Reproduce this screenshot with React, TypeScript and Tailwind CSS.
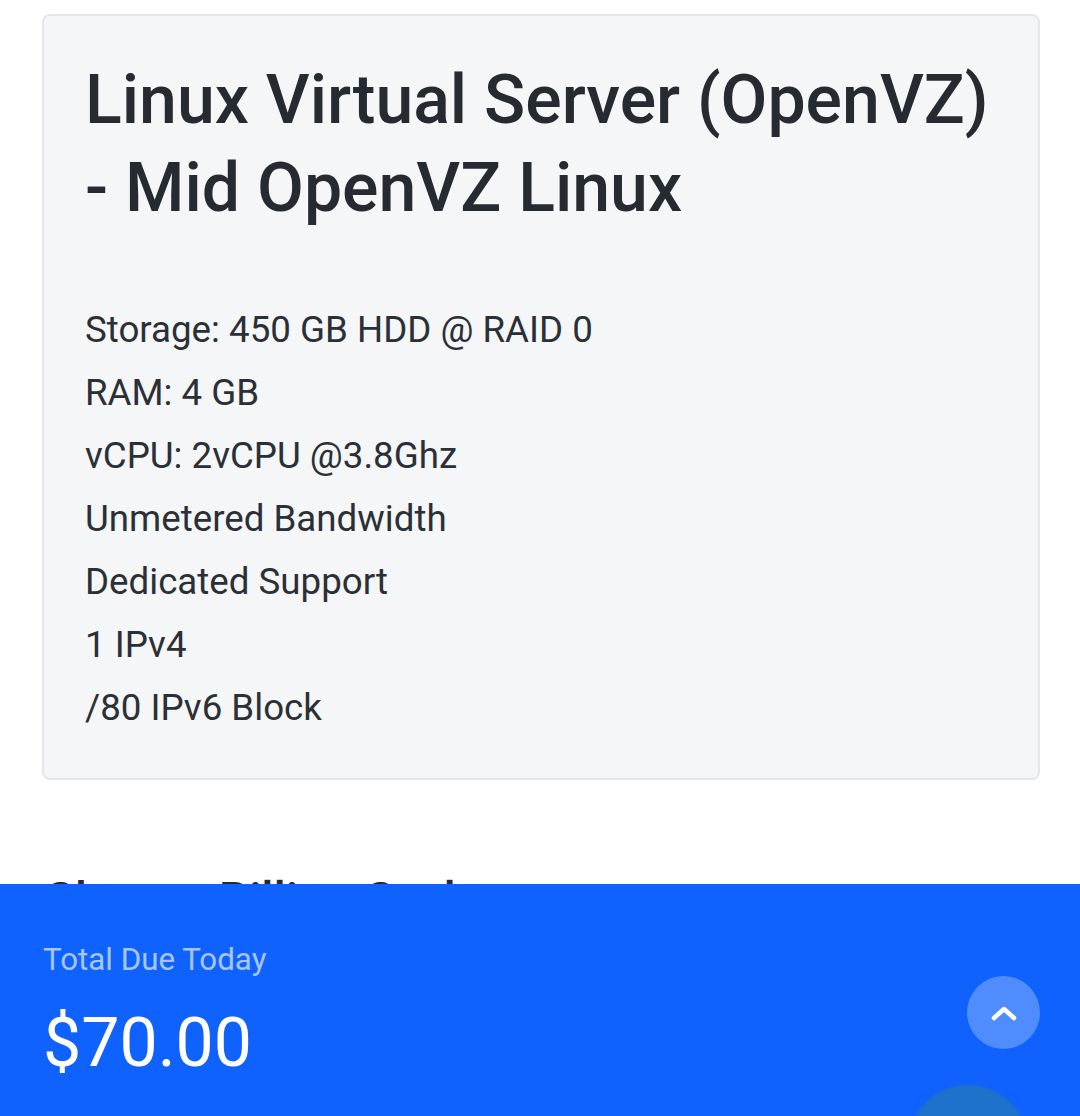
import React from 'react';

const features = [
  'Storage: 450 GB HDD @ RAID 0',
  'RAM: 4 GB',
  'vCPU: 2vCPU @3.8Ghz',
  'Unmetered Bandwidth',
  'Dedicated Support',
  '1 IPv4',
  '/80 IPv6 Block',
];

export default function App() {
  return (
    <div className="relative h-[1116px] w-[1080px] overflow-hidden bg-white font-['Roboto',sans-serif] text-[#2b3036]">
      {/* Product card */}
      <div className="ml-[42px] mr-[40px] mt-[14px] rounded-lg border-2 border-[#e4e6ea] bg-[#f5f6f8] px-[41px] pb-[39px] pt-[40px]">
        <h1 className="text-[68px] font-medium leading-[88px] text-[#262a31]">
          Linux Virtual Server (OpenVZ) - Mid OpenVZ Linux
        </h1>
        <div className="mt-[66px] text-[36.7px] leading-[63px]">
          {features.map((f) => (
            <div key={f}>{f}</div>
          ))}
        </div>
      </div>

      <h2 className="ml-[44px] mt-[84px] text-[48px] font-medium text-[#262a31]">Choose Billing Cycle</h2>

      {/* Sticky order summary */}
      <div className="absolute bottom-0 left-0 h-[232px] w-full bg-[#0f62fe] px-[43px] pt-[58px]">
        <p className="text-[31.3px] leading-[36px] text-[#a6c6ff]">Total Due Today</p>
        <p className="mt-[25px] text-[68px] leading-[80px] text-white">$70.00</p>
        <button className="absolute right-[40px] top-[92px] flex h-[73px] w-[73px] items-center justify-center rounded-full bg-[#4f8dfe]">
          <svg width="28" height="18" viewBox="0 0 28 18" fill="none">
            <path d="M4 14 L14 5 L24 14" stroke="white" strokeWidth="4.5" strokeLinecap="round" strokeLinejoin="round" />
          </svg>
        </button>
        <div className="absolute left-[908px] top-[201px] h-[120px] w-[120px] rounded-full bg-[#1f72cc] blur-[1px]" />
      </div>
    </div>
  );
}
